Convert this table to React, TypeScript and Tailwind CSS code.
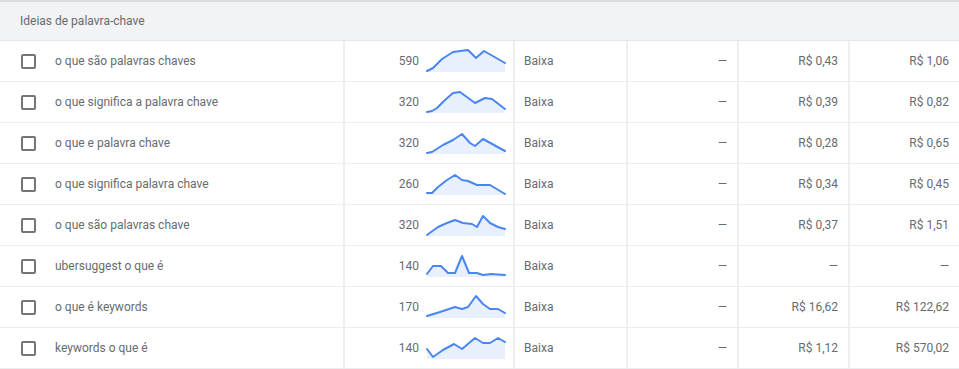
import React from "react";

type Row = {
  keyword: string;
  volume: string;
  trend: [number, number][];
  competition: string;
  share: string;
  low: string;
  high: string;
};

const rows: Row[] = [
  {
    keyword: "o que são palavras chaves",
    volume: "590",
    trend: [[1, 23], [7, 20], [16, 11], [27, 4], [42, 2], [50, 10], [58, 3], [79, 15]],
    competition: "Baixa",
    share: "—",
    low: "R$ 0,43",
    high: "R$ 1,06",
  },
  {
    keyword: "o que significa a palavra chave",
    volume: "320",
    trend: [[1, 23], [6, 22], [11, 19], [19, 11], [27, 4], [34, 3], [49, 14], [59, 9], [66, 10], [79, 20]],
    competition: "Baixa",
    share: "—",
    low: "R$ 0,39",
    high: "R$ 0,82",
  },
  {
    keyword: "o que e palavra chave",
    volume: "320",
    trend: [[1, 23], [6, 22], [17, 15], [27, 10], [36, 4], [44, 13], [49, 16], [57, 9], [79, 21]],
    competition: "Baixa",
    share: "—",
    low: "R$ 0,28",
    high: "R$ 0,65",
  },
  {
    keyword: "o que significa palavra chave",
    volume: "260",
    trend: [[1, 22], [6, 22], [12, 16], [21, 9], [29, 4], [36, 9], [42, 10], [51, 14], [64, 14], [79, 23]],
    competition: "Baixa",
    share: "—",
    low: "R$ 0,34",
    high: "R$ 0,45",
  },
  {
    keyword: "o que são palavras chave",
    volume: "320",
    trend: [[1, 23], [12, 15], [21, 11], [29, 8], [37, 11], [46, 12], [51, 15], [57, 4], [64, 11], [72, 15], [79, 17]],
    competition: "Baixa",
    share: "—",
    low: "R$ 0,37",
    high: "R$ 1,51",
  },
  {
    keyword: "ubersuggest o que é",
    volume: "140",
    trend: [[1, 21], [7, 13], [15, 13], [22, 20], [29, 20], [36, 3], [43, 20], [51, 20], [57, 22], [65, 21], [79, 22]],
    competition: "Baixa",
    share: "—",
    low: "—",
    high: "—",
  },
  {
    keyword: "o que é keywords",
    volume: "170",
    trend: [[1, 22], [14, 18], [29, 13], [36, 15], [42, 13], [50, 2], [57, 10], [64, 15], [72, 15], [79, 19]],
    competition: "Baixa",
    share: "—",
    low: "R$ 16,62",
    high: "R$ 122,62",
  },
  {
    keyword: "keywords o que é",
    volume: "140",
    trend: [[1, 14], [7, 22], [17, 15], [28, 9], [36, 14], [49, 3], [57, 8], [64, 8], [72, 3], [79, 7]],
    competition: "Baixa",
    share: "—",
    low: "R$ 1,12",
    high: "R$ 570,02",
  },
];

function Sparkline({ points }: { points: [number, number][] }) {
  const line = points.map(([x, y]) => `${x},${y}`).join(" ");
  const first = points[0];
  const last = points[points.length - 1];
  const area = `${first[0]},24 ${line} ${last[0]},24`;
  return (
    <svg width="82" height="25" viewBox="0 0 82 25" className="self-start mt-[7px] shrink-0">
      <polygon points={area} fill="#e8f0fe" />
      <polyline
        points={line}
        fill="none"
        stroke="#4a86f0"
        strokeWidth="2"
        strokeLinejoin="round"
        strokeLinecap="round"
      />
    </svg>
  );
}

export default function App() {
  return (
    <div
      className="w-[959px] h-[369px] overflow-hidden bg-white text-[12px] text-[#676b70]"
      style={{ fontFamily: "Roboto, 'Liberation Sans', sans-serif" }}
    >
      <div className="h-[41px] flex items-center pl-5 bg-[#f1f3f4] border-t-2 border-[#dadce0] border-b border-b-[#e3e5e8]">
        Ideias de palavra-chave
      </div>
      {rows.map((r) => (
        <div
          key={r.keyword}
          className="grid grid-cols-[343px_170px_113px_111px_111px_111px] h-[41px] border-b border-[#ebedef]"
        >
          <div className="flex items-center pl-[21px] gap-[19px]">
            <span className="w-[15px] h-[15px] border-2 border-[#757575] rounded-[2px] shrink-0" />
            <span>{r.keyword}</span>
          </div>
          <div className="flex items-center gap-[7px] pr-[5px] border-l-2 border-[#eeeff1]">
            <span className="flex-1 text-right">{r.volume}</span>
            <Sparkline points={r.trend} />
          </div>
          <div className="flex items-center pl-[9px] border-l-2 border-[#eeeff1]">{r.competition}</div>
          <div className="flex items-center justify-end pr-[10px] border-l-2 border-[#eeeff1]">{r.share}</div>
          <div className="flex items-center justify-end pr-[10px] border-l-2 border-[#eeeff1]">{r.low}</div>
          <div className="flex items-center justify-end pr-[10px] border-l-2 border-[#eeeff1]">{r.high}</div>
        </div>
      ))}
    </div>
  );
}
